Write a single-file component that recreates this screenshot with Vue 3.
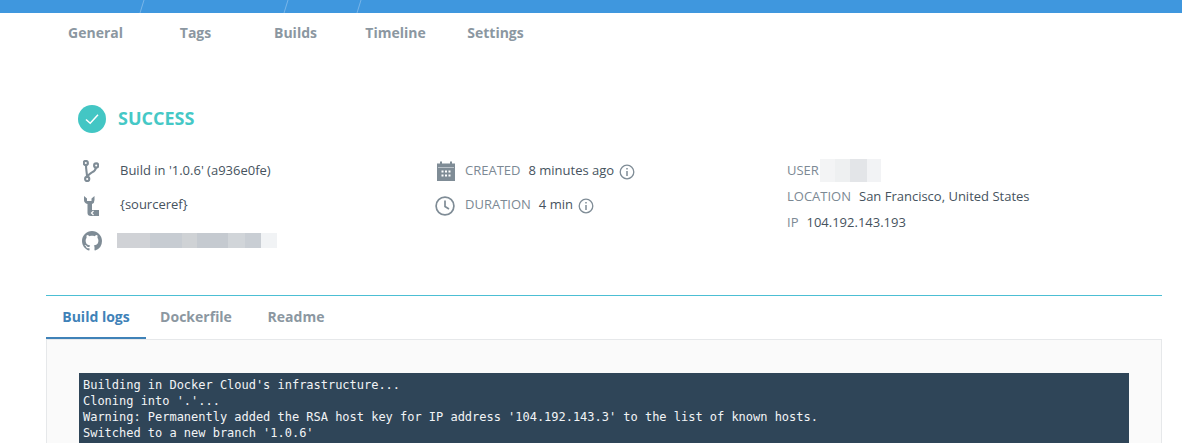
<script setup>
const tabs = ['General', 'Tags', 'Builds', 'Timeline', 'Settings']
const subTabs = ['Build logs', 'Dockerfile', 'Readme']
const logs = [
  "Building in Docker Cloud's infrastructure...",
  "Cloning into '.'...",
  "Warning: Permanently added the RSA host key for IP address '104.192.143.3' to the list of known hosts.",
  "Switched to a new branch '1.0.6'"
]
const blurA = [
  ['#d0d2d6', 33], ['#c7ccd2', 32], ['#cfd2d5', 15], ['#c5cad0', 31],
  ['#d1d5d9', 17], ['#c9ced4', 16], ['#f1f3f5', 16]
]
const blurB = [['#f3f4f5', 15], ['#eef0f1', 15], ['#e3e5e8', 17], ['#f2f3f5', 14]]
</script>

<template>
  <div class="page">
    <div class="topbar">
      <svg width="1182" height="13" viewBox="0 0 1182 13">
        <path d="M140 13 L144 0 M284 13 L288 0 M357 13 L361 0" stroke="#78b5e8" stroke-width="1" fill="none" />
      </svg>
    </div>

    <nav class="nav">
      <span v-for="t in tabs" :key="t" class="nav-item">{{ t }}</span>
    </nav>

    <div class="status">
      <span class="status-dot">
        <svg width="16" height="16" viewBox="0 0 16 16">
          <path d="M2 8.5 L6.2 12.3 L14 3.8" stroke="#fff" stroke-width="1.5" fill="none" />
        </svg>
      </span>
      <span class="status-text">SUCCESS</span>
    </div>

    <section class="info">
      <div class="col col-a">
        <div class="row">
          <svg class="ico" width="16" height="22" viewBox="0 0 16 22" fill="none" stroke="#7f8c96" stroke-width="2.1">
            <circle cx="2.8" cy="3" r="2.1" />
            <circle cx="4.2" cy="19" r="2.1" />
            <circle cx="13.2" cy="5.5" r="2.1" />
            <path d="M3 5 C3 11 4 12 4 17 M13 7.6 C12.5 13 6 11.5 4.4 17" />
          </svg>
          <span class="val">Build in '1.0.6' (a936e0fe)</span>
        </div>
        <div class="row">
          <svg class="ico" width="16" height="21" viewBox="0 0 16 21" fill="#7f8c96">
            <path d="M0 0 L0 4 Q0 7 3.500 8 L3.500 17 Q3.500 20 7 20 L15 20 L15 14 L8 14 L8 8 Q10.500 7 10.500 4 L10.500 0 L7.500 2.500 L7.500 5 L3 5 L3 2.500 Z" />
            <path d="M9.500 15 L7.500 17 L9.500 19" stroke="#fff" stroke-width="1.2" fill="none" />
          </svg>
          <span class="val">{sourceref}</span>
        </div>
        <div class="row">
          <svg class="ico" width="20" height="20" viewBox="0 0 16 16" fill="#7f8c96">
            <path d="M8 0C3.58 0 0 3.58 0 8c0 3.54 2.29 6.53 5.47 7.59.4.07.55-.17.55-.38 0-.19-.01-.82-.01-1.49-2.01.37-2.53-.49-2.69-.94-.09-.23-.48-.94-.82-1.13-.28-.15-.68-.52-.01-.53.63-.01 1.08.58 1.23.82.72 1.21 1.87.87 2.33.66.07-.52.28-.87.51-1.07-1.78-.2-3.64-.89-3.64-3.95 0-.87.31-1.59.82-2.15-.08-.2-.36-1.02.08-2.12 0 0 .67-.21 2.2.82.64-.18 1.32-.27 2-.27s1.36.09 2 .27c1.53-1.04 2.2-.82 2.2-.82.44 1.1.16 1.92.08 2.12.51.56.82 1.27.82 2.15 0 3.07-1.87 3.75-3.65 3.95.29.25.54.73.54 1.48 0 1.07-.01 1.93-.01 2.2 0 .21.15.46.55.38A8.01 8.01 0 0 0 16 8c0-4.42-3.58-8-8-8z" />
          </svg>
          <span class="blur blur-a">
            <i v-for="(b, i) in blurA" :key="i" :style="{ background: b[0], width: b[1] + 'px' }"></i>
          </span>
        </div>
      </div>

      <div class="col col-b">
        <div class="row">
          <svg class="ico" width="18" height="20" viewBox="0 0 18 20" fill="#7f8c96">
            <path d="M0 2.5 H3 V0.5 H5 V2.5 H13 V0.5 H15 V2.5 H18 V20 H0 Z" />
            <path d="M1 6.5 H17" stroke="#c9d0d5" stroke-width="0.8" />
            <path d="M4.5 9.5h2v2h-2zM8 9.5h2v2H8zM11.500 9.500h2v2h-2zM4.500 13.500h2v2h-2zM8 13.500h2v2H8zM11.500 13.500h2v2h-2z" fill="#fff" />
          </svg>
          <span class="lab">CREATED</span><span class="val">8 minutes ago</span>
          <svg class="info-ico" width="16" height="16" viewBox="0 0 16 16">
            <circle cx="8" cy="8" r="6.8" fill="none" stroke="#7f8c96" stroke-width="1.3" />
            <path d="M8 7 V12 M8 4 V5.6" stroke="#7f8c96" stroke-width="1.5" />
          </svg>
        </div>
        <div class="row">
          <svg class="ico" width="20" height="20" viewBox="0 0 20 20" fill="none" stroke="#7f8c96" stroke-width="1.7">
            <circle cx="10" cy="10" r="8.9" />
            <path d="M10 4.5 V10.500 L14 13" />
          </svg>
          <span class="lab">DURATION</span><span class="val">4 min</span>
          <svg class="info-ico" width="16" height="16" viewBox="0 0 16 16">
            <circle cx="8" cy="8" r="6.8" fill="none" stroke="#7f8c96" stroke-width="1.3" />
            <path d="M8 7 V12 M8 4 V5.6" stroke="#7f8c96" stroke-width="1.5" />
          </svg>
        </div>
      </div>

      <div class="col col-c">
        <div class="line">
          <span class="lab user-lab">USER</span>
          <span class="blur blur-b">
            <i v-for="(b, i) in blurB" :key="i" :style="{ background: b[0], width: b[1] + 'px' }"></i>
          </span>
        </div>
        <div class="line"><span class="lab">LOCATION</span><span class="val">San Francisco, United States</span></div>
        <div class="line"><span class="lab">IP</span><span class="val">104.192.143.193</span></div>
      </div>
    </section>

    <section class="logs">
      <div class="subtabs">
        <span v-for="(t, i) in subTabs" :key="t" class="subtab" :class="{ active: i === 0 }">{{ t }}</span>
      </div>
      <div class="panel">
        <pre class="console"><code v-for="l in logs" :key="l">{{ l }}
</code></pre>
      </div>
    </section>
  </div>
</template>

<style scoped>
.page {
  height: 443px;
  overflow: hidden;
  background: #fff;
  font-family: "Open Sans", sans-serif;
}
.topbar {
  height: 13px;
  background: #3f97de;
}
.topbar svg { display: block; }
.nav {
  display: flex;
  height: 39px;
  padding-left: 45.5px;
  align-items: center;
}
.nav-item {
  width: 100px;
  text-align: center;
  font-size: 14px;
  font-weight: 700;
  color: #8b97a1;
}
.status {
  display: flex;
  align-items: center;
  gap: 12px;
  margin: 53px 0 0 78px;
  height: 28px;
}
.status-dot {
  width: 28px;
  height: 28px;
  border-radius: 50%;
  background: #43c6c4;
  display: flex;
  align-items: center;
  justify-content: center;
}
.status-text {
  font-size: 18px;
  font-weight: 700;
  color: #45c8c6;
  margin-bottom: 2px;
}
.info {
  display: flex;
  margin-top: 27px;
  height: 135px;
}
.col-a { width: 435px; padding-left: 82px; box-sizing: border-box; }
.col-b { width: 352px; }
.col-c { margin-top: -3px; }
.col-a, .col-b { display: flex; flex-direction: column; gap: 14px; }
.row {
  display: flex;
  align-items: center;
  height: 20px;
  font-size: 13px;
}
.ico { flex: none; }
.col-a .row:nth-child(1) .ico { margin: 2px 21px 0 1px; }
.col-a .row:nth-child(2) .ico { margin: 5px 20px 0 2px; }
.col-a .row:nth-child(3) .ico { margin: 2px 15px 0 0; }
.col-a .row:nth-child(3) { margin-top: 2px; }
.col-b .row:nth-child(1) .ico { margin: 2px 10px 0 2px; }
.col-b .row:nth-child(2) .ico { margin: 4px 10px 0 0; }
.lab { color: #7c8994; margin-right: 8px; }
.val { color: #46535e; }
.info-ico { margin: 3px 0 0 5px; }
.line {
  display: flex;
  align-items: center;
  height: 26px;
  font-size: 13px;
}
.user-lab { margin-right: 1px; }
.blur { display: flex; }
.blur i { display: block; height: 100%; }
.blur-a { height: 15px; }
.blur-b { height: 23px; }
.logs { margin: 0 20px 0 46px; border-top: 1px solid #4cbfd4; }
.subtabs {
  display: flex;
  height: 43px;
}
.subtab {
  width: 100px;
  height: 41px;
  line-height: 41px;
  text-align: center;
  font-size: 14px;
  font-weight: 700;
  color: #8b97a1;
}
.subtab.active {
  color: #3f82b8;
  border-bottom: 2px solid #3f82b8;
}
.panel {
  border: 1px solid #e6e8ea;
  background: #fafafa;
  padding: 33px 32px 0;
  height: 200px;
  box-sizing: border-box;
}
.console {
  margin: 0;
  padding: 4px;
  height: 160px;
  background: #2f4558;
  color: #f2f4f6;
  font-family: "DejaVu Sans Mono", monospace;
  font-size: 12px;
  letter-spacing: -0.02px;
  line-height: 16px;
}
.console code { font: inherit; letter-spacing: inherit; }
</style>

<style>
html, body { overflow: hidden; }
</style>
